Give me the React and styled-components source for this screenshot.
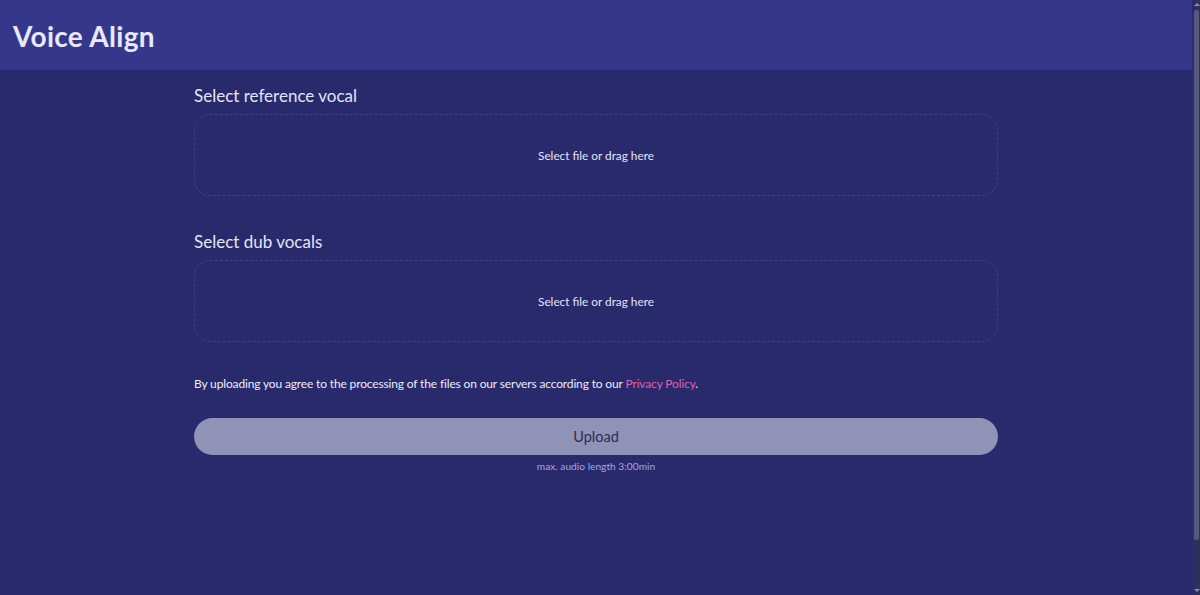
import React from "react";
import styled, { createGlobalStyle } from "styled-components";

const Global = createGlobalStyle`
  html, body { margin: 0; padding: 0; background: #282a6c; }
  body { font-family: Lato, "Open Sans", sans-serif; color: #e4e4fa; }
`;

const Page = styled.div`
  min-height: 595px;
  background: #282a6c;
  padding-right: 8px;
`;

const Header = styled.header`
  height: 70px;
  background: #35388a;
  display: flex;
  align-items: center;
  padding: 0 13px;
  box-sizing: border-box;
`;

const Title = styled.h1`
  margin: 0;
  font-size: 28px;
  font-weight: 700;
  color: #e8e8fb;
  letter-spacing: 0.3px;
  padding-top: 2px;
`;

const Main = styled.main`
  width: 804px;
  margin: 0 auto;
  padding-top: 14px;
  display: flex;
  flex-direction: column;
`;

const Section = styled.section`
  display: flex;
  flex-direction: column;
  margin-bottom: 34px;
`;

const Label = styled.h2`
  margin: 0 0 7px;
  font-size: 17px;
  font-weight: 400;
  line-height: 23px;
  color: #e4e4fa;
`;

const Drop = styled.div`
  height: 82px;
  box-sizing: border-box;
  border: 1px dashed #3d4088;
  border-radius: 16px;
  display: flex;
  align-items: center;
  justify-content: center;
  font-size: 11.8px;
  color: #e4e4fa;
  cursor: pointer;
`;

const Notice = styled.p`
  margin: 0 0 26px;
  font-size: 12px;
  letter-spacing: -0.15px;
  line-height: 16px;
  color: #ececfb;
`;

const Link = styled.a`
  color: #e05fb0;
  text-decoration: none;
`;

const Button = styled.button`
  height: 37px;
  width: 100%;
  border: none;
  border-radius: 19px;
  background: #9092b6;
  color: #2b2c58;
  font-family: inherit;
  font-size: 14.5px;
  cursor: pointer;
`;

const Hint = styled.div`
  margin-top: 5px;
  text-align: center;
  font-size: 10.2px;
  color: #a3a5e6;
`;

const ScrollBar = styled.div`
  position: fixed;
  top: 0;
  right: 0;
  width: 7px;
  height: 100%;
  background: #2e2f5c;
  display: flex;
  flex-direction: column;
  align-items: center;
`;

const Arrow = styled.div`
  width: 0;
  height: 0;
  margin: 3px 0;
  border-left: 3px solid transparent;
  border-right: 3px solid transparent;
  ${(p) => (p.$down ? "border-top: 3px solid #8c8db0;" : "border-bottom: 3px solid #8c8db0;")}
`;

const Thumb = styled.div`
  flex: 1;
  width: 5px;
  margin: 1px 0 46px;
  background: #56587e;
  border-radius: 2px;
`;

export default function App() {
  return (
    <Page>
      <Global />
      <Header>
        <Title>Voice Align</Title>
      </Header>
      <Main>
        <Section>
          <Label>Select reference vocal</Label>
          <Drop>Select file or drag here</Drop>
        </Section>
        <Section>
          <Label>Select dub vocals</Label>
          <Drop>Select file or drag here</Drop>
        </Section>
        <Notice>
          By uploading you agree to the processing of the files on our servers according to our{" "}
          <Link href="#">Privacy Policy</Link>.
        </Notice>
        <Button>Upload</Button>
        <Hint>max. audio length 3:00min</Hint>
      </Main>
      <ScrollBar>
        <Arrow />
        <Thumb />
        <Arrow $down />
      </ScrollBar>
    </Page>
  );
}
